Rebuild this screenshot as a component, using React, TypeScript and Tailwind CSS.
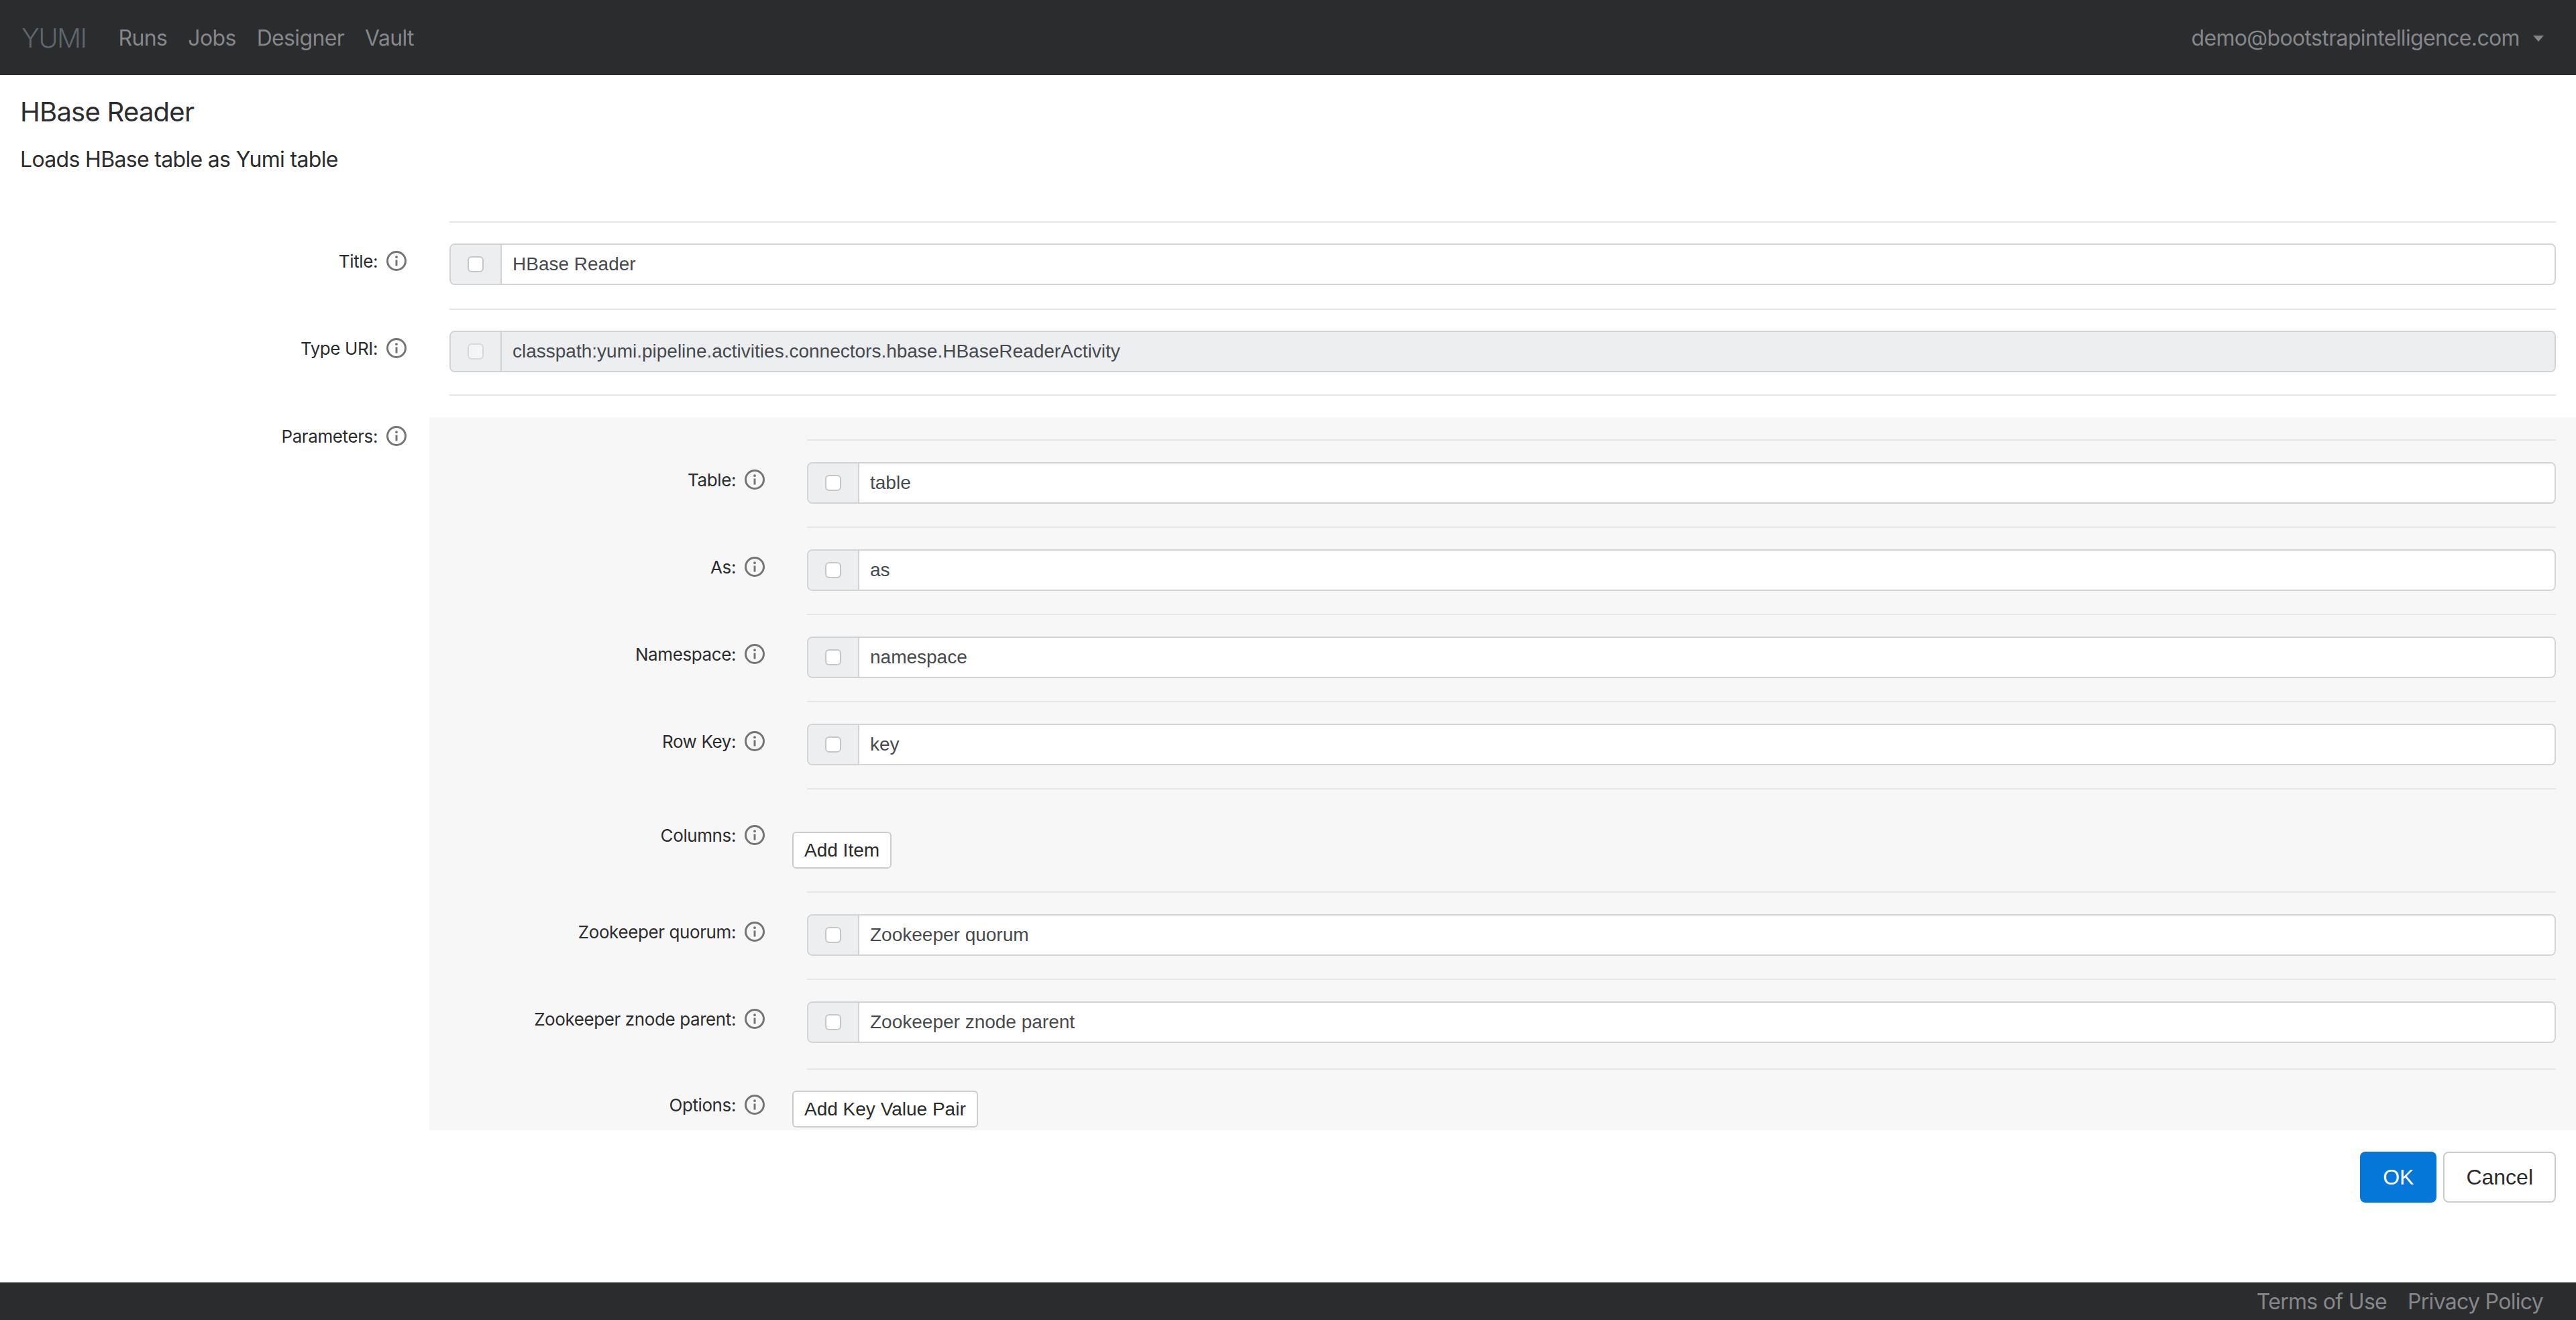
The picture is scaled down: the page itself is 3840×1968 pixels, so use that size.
import type { ReactNode } from "react";

const InfoIcon = () => (
  <svg width="32" height="32" viewBox="0 0 32 32" fill="none" className="shrink-0">
    <circle cx="16" cy="16" r="13.5" stroke="#757575" strokeWidth="3" />
    <circle cx="16" cy="10.2" r="1.9" fill="#757575" />
    <path d="M16 14.5v9" stroke="#757575" strokeWidth="3" />
  </svg>
);

const Label = ({ text, width }: { text: string; width: string }) => (
  <div className={`${width} shrink-0 flex justify-end items-center gap-[12px] h-[32px] text-[26px] tracking-[-0.4px] text-[#2b2c2e]`}>
    <span>{text}</span>
    <InfoIcon />
  </div>
);

const TextField = ({ value, disabled }: { value: string; disabled?: boolean }) => (
  <div className="flex h-[62px] border-2 border-[#d2d3d5] rounded-[8px] overflow-hidden font-['Liberation_Sans',sans-serif] text-[28px] tracking-normal">
    <div className="w-[76px] shrink-0 flex items-center justify-center bg-[#eceef0] border-r-2 border-[#d2d3d5]">
      <div
        className={
          disabled
            ? "w-[24px] h-[24px] rounded-[6px] border-2 border-[#d8d8d8] bg-[#f4f5f6]"
            : "w-[24px] h-[24px] rounded-[6px] border-2 border-[#c6c6c6] bg-white"
        }
      />
    </div>
    <div
      className={
        disabled
          ? "flex-1 flex items-center px-[16px] bg-[#eceef0] text-[#464a4e]"
          : "flex-1 flex items-center px-[16px] bg-white text-[#464a4e]"
      }
    >
      {value}
    </div>
  </div>
);

const AddButton = ({ text }: { text: string }) => (
  <button className="block h-[55px] px-[16px] bg-white border-2 border-[#cccccc] rounded-[6px] font-['Liberation_Sans',sans-serif] text-[28px] text-[#292b2c]">
    {text}
  </button>
);

const Divider = ({ left }: { left: string }) => <div className={`${left} mr-[30px] h-[2px] bg-[#e6e6e6]`} />;

// Top level rows
const Row = ({ label, children, tight }: { label: string; children: ReactNode; tight?: boolean }) => (
  <div>
    <Divider left="ml-[670px]" />
    <div className="flex">
      <div className="pt-[41px]">
        <Label text={label} width="w-[607px]" />
      </div>
      <div className={tight ? "flex-1 ml-[63px] mr-[30px] pt-[31px] pb-[33px]" : "flex-1 ml-[63px] mr-[30px] pt-[31px] pb-[35px]"}>
        {children}
      </div>
    </div>
  </div>
);

// Rows inside the parameters panel
const ParamRow = ({ label, value, extra }: { label: string; value: string; extra?: boolean }) => (
  <div>
    <Divider left="ml-[563px]" />
    <div className="flex">
      <div className="pt-[42px]">
        <Label text={label} width="w-[501px]" />
      </div>
      <div className={extra ? "flex-1 ml-[62px] mr-[30px] pt-[32px] pb-[38px]" : "flex-1 ml-[62px] mr-[30px] pt-[32px] pb-[34px]"}>
        <TextField value={value} />
      </div>
    </div>
  </div>
);

const ButtonRow = ({ label, text, labelTop, buttonTop }: { label: string; text: string; labelTop: string; buttonTop: string }) => (
  <div>
    <Divider left="ml-[563px]" />
    <div className="flex">
      <div className={labelTop}>
        <Label text={label} width="w-[501px]" />
      </div>
      <div className={`flex-1 ml-[40px] mr-[30px] ${buttonTop} pb-[34px]`}>
        <AddButton text={text} />
      </div>
    </div>
  </div>
);

const App = () => {
  return (
    <div className="w-[3840px] h-[1968px] flex flex-col bg-white overflow-hidden font-['Inter',sans-serif]">
      {/* Navbar */}
      <nav className="h-[112px] shrink-0 bg-[#2b2c2e] flex items-center justify-between pl-[32px] pr-[48px] pt-[2px] text-[32px] tracking-[-0.65px] text-[#85878a]">
        <div className="flex items-center">
          <span className="text-[40px] font-light tracking-[-1.5px] text-[#5f666d] mr-[48px]">YUMI</span>
          <div className="flex items-center gap-[31px]">
            <span>Runs</span>
            <span>Jobs</span>
            <span>Designer</span>
            <span>Vault</span>
          </div>
        </div>
        <div className="flex items-center gap-[20px]">
          <span>demo@bootstrapintelligence.com</span>
          <span className="w-0 h-0 border-x-[8px] border-x-transparent border-t-[9px] border-t-[#85878a]" />
        </div>
      </nav>

      {/* Main */}
      <main className="flex-1 min-h-0 flex flex-col">
        <div className="px-[30px] pt-[30px] text-[#2b2c2e]">
          <h1 className="text-[40px] leading-[50px] font-normal tracking-[-0.75px]">HBase Reader</h1>
          <p className="mt-[22px] text-[32px] leading-[48px] tracking-[-0.67px]">Loads HBase table as Yumi table</p>
        </div>

        <div className="mt-[68px]">
          <Row label="Title:">
            <TextField value="HBase Reader" />
          </Row>
          <Row label="Type URI:" tight>
            <TextField value="classpath:yumi.pipeline.activities.connectors.hbase.HBaseReaderActivity" disabled />
          </Row>
          <Divider left="ml-[670px]" />
        </div>

        {/* Parameters panel */}
        <div className="flex mt-[32px]">
          <div className="w-[640px] shrink-0 pt-[12px]">
            <Label text="Parameters:" width="w-[607px]" />
          </div>
          <div className="flex-1 h-[1063px] overflow-hidden bg-[#f7f7f7] pt-[33px]">
            <ParamRow label="Table:" value="table" />
            <ParamRow label="As:" value="as" />
            <ParamRow label="Namespace:" value="namespace" />
            <ParamRow label="Row Key:" value="key" />
            <ButtonRow label="Columns:" text="Add Item" labelTop="pt-[52px]" buttonTop="pt-[63px]" />
            <ParamRow label="Zookeeper quorum:" value="Zookeeper quorum" />
            <ParamRow label="Zookeeper znode parent:" value="Zookeeper znode parent" extra />
            <ButtonRow label="Options:" text="Add Key Value Pair" labelTop="pt-[36px]" buttonTop="pt-[31px]" />
          </div>
        </div>

        <div className="flex justify-end gap-[10px] mt-[32px] mr-[30px] font-['Liberation_Sans',sans-serif] text-[32px]">
          <button className="h-[76px] px-[34px] rounded-[8px] bg-[#0477d9] text-white">OK</button>
          <button className="h-[76px] px-[32px] rounded-[8px] bg-white border-2 border-[#cccccc] text-[#292b2c]">Cancel</button>
        </div>
      </main>

      <footer className="h-[56px] shrink-0 bg-[#2b2c2e] flex items-center justify-end gap-[31px] pr-[49px] pt-[2px] text-[32px] tracking-[-0.7px] text-[#85878a]">
        <span>Terms of Use</span>
        <span>Privacy Policy</span>
      </footer>
    </div>
  );
};

export default App;
